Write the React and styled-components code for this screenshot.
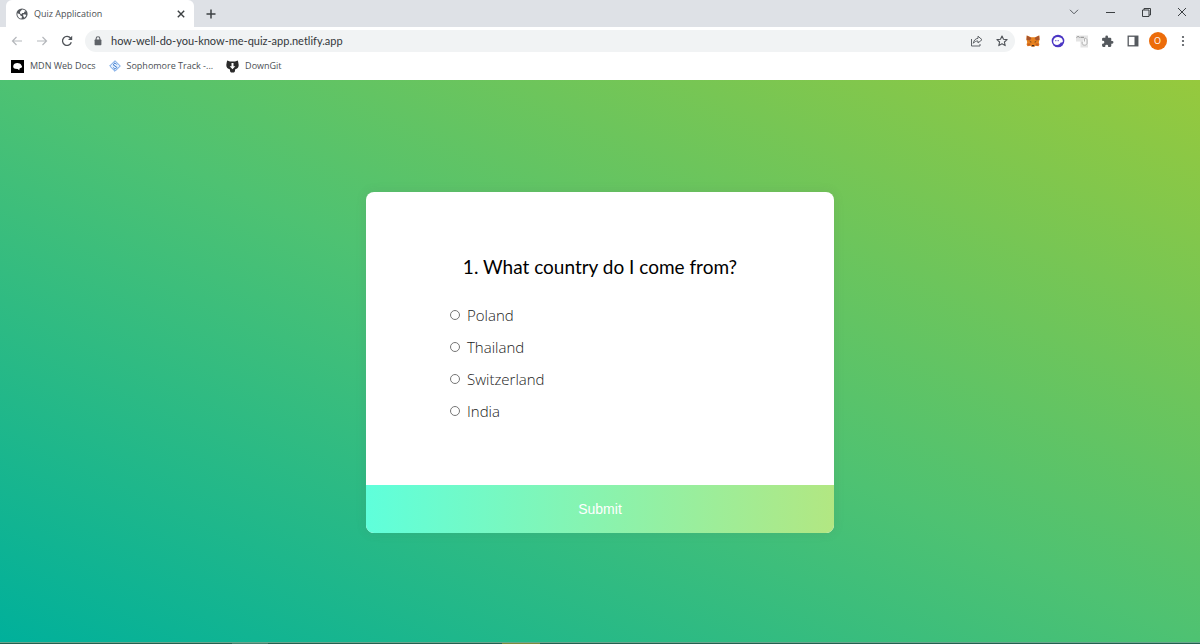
import React, { useState } from "react";
import styled, { createGlobalStyle } from "styled-components";

const answers = ["Poland", "Thailand", "Switzerland", "India"];

const GlobeIcon = () => (
  <svg width="12" height="12" viewBox="0 0 12 12">
    <circle cx="6" cy="6" r="5.6" fill="#55595e" />
    <path
      d="M1.4 5.2 4 6.3l.6 1.4L6 8.3l-.4 2.2C3 10.6 1.2 8.5 1.4 5.2zM4.2 3.4 6.2 1.5c1.5 0 2.8.7 3.5 1.8L8.3 3.8 8 5.1 6.3 5 5.3 6.2 3.9 5.2zM7.3 6.3l2.1.2.9.6c-.3 1.2-1 2.1-1.9 2.7L7.2 8z"
      fill="#fff"
    />
  </svg>
);

const CloseIcon = ({ size = 8, thick = 1.4 }) => (
  <svg width={size} height={size} viewBox="0 0 8 8">
    <path d="M.8.8 7.2 7.2M7.2.8.8 7.2" stroke="#3c4043" strokeWidth={thick} />
  </svg>
);

const PlusIcon = () => (
  <svg width="10" height="10" viewBox="0 0 10 10">
    <path d="M5 .5v9M.5 5h9" stroke="#3c4043" strokeWidth="1.5" />
  </svg>
);

const ArrowIcon = ({ flip }) => (
  <svg width="12" height="10" viewBox="0 0 12 10">
    <path
      d={flip ? "M1 5h9.5M6.5 1l4 4-4 4" : "M11 5H1.5M5.5 1l-4 4 4 4"}
      fill="none"
      stroke="#b4b7bb"
      strokeWidth="1.2"
    />
  </svg>
);

const ReloadIcon = () => (
  <svg width="12" height="12" viewBox="0 0 12 12">
    <path
      d="M10.3 7.3A4.5 4.5 0 1 1 9.6 3.2L10.6 4.3"
      fill="none"
      stroke="#4f5358"
      strokeWidth="1.3"
    />
    <path d="M11.2.8v4.2H7z" fill="#4f5358" />
  </svg>
);

const LockIcon = () => (
  <svg width="8" height="10" viewBox="0 0 8 10">
    <path d="M2.1 4V2.7a1.9 1.9 0 0 1 3.8 0V4" fill="none" stroke="#5f6368" strokeWidth="1.1" />
    <rect x=".6" y="3.6" width="6.8" height="5.6" rx=".7" fill="#5f6368" />
  </svg>
);

const ShareIcon = () => (
  <svg width="13" height="12" viewBox="0 0 13 12">
    <path d="M1.5 4v7h8.5V9" fill="none" stroke="#5f6368" />
    <path
      d="M8 1.2 12 4.7 8 8V6C6 6 4.5 6.6 3.3 8.3 3.7 5.5 5.3 3.7 8 3.3z"
      fill="none"
      stroke="#5f6368"
      strokeLinejoin="round"
    />
  </svg>
);

const StarIcon = () => (
  <svg width="12" height="12" viewBox="0 0 12 12">
    <path
      d="m6 1 1.5 3.3 3.6.3-2.7 2.4.8 3.6L6 8.7l-3.2 1.9.8-3.6L.9 4.6l3.6-.3z"
      fill="none"
      stroke="#4f5358"
      strokeWidth="1.1"
      strokeLinejoin="round"
    />
  </svg>
);

const FoxIcon = () => (
  <svg width="14" height="12" viewBox="0 0 14 12">
    <path
      d="M.8.5 5 2.3h4L13.2.5l.4 3.8-.8 3 .6 2.3-1 1.7-2.9-.6L8.3 11.8H5.7L4.5 10.7l-2.9.6-1-1.7.6-2.3-.8-3z"
      fill="#e8821e"
    />
    <path d="M.8.5 5.4 3 4 5.5.6 5zM13.2.5 8.6 3 10 5.5l3.4-.5z" fill="#a9542b" />
    <path d="m3.4 6.3 2 .4-.3 1.1zM10.6 6.3l-2 .4.3 1.1zM6 10h2l.4 1.3H5.6z" fill="#3d2a22" />
    <path d="m1.5 8.4 3 .2-.3 1.6-2.7.6zM12.5 8.4l-3 .2.3 1.6 2.7.6z" fill="#c75f20" />
  </svg>
);

const GhostIcon = () => (
  <svg width="14" height="14" viewBox="0 0 14 14">
    <circle cx="7" cy="7" r="6.3" fill="#4b36c4" />
    <path
      d="M2.2 7.6C2.2 4.8 4.3 3 7.1 3.1c2.9.1 4.9 2 4.8 4.2-.1 1.1-.9 1.4-2.2 1.3-.7 1.6-2 2.4-3.6 2.4C3.7 11 2.2 9.6 2.2 7.6z"
      fill="#fff"
    />
    <path d="M4.2 6.7h1.2M6.6 6.7h1.2" stroke="#4b36c4" strokeWidth="1" />
  </svg>
);

const GrabIcon = () => (
  <svg width="13" height="13" viewBox="0 0 13 13">
    <path d="M0 .5h12v12H4.5V6.5H0z" fill="#e4e4e4" />
    <path d="M.5 2.6c1-1.4 2.6-1.2 3.2 0M4.5 2.3H8" fill="none" stroke="#8d8d8d" />
    <path
      d="M8.5 3.6c1.3-.7 2.5 0 2.5 1.5v3.2c0 2.5-4.8 2.5-4.8 0V6.7M8.5 3.6v2.9"
      fill="#f7f7f7"
      stroke="#a2a2a2"
      strokeWidth=".8"
    />
  </svg>
);

const PuzzleIcon = () => (
  <svg width="13" height="13" viewBox="0 0 24 24">
    <path
      d="M20.5 11H19V7a2 2 0 0 0-2-2h-4V3.5a2.5 2.5 0 0 0-5 0V5H4a2 2 0 0 0-2 2v3.8h1.5a2.7 2.7 0 0 1 0 5.4H2V20a2 2 0 0 0 2 2h3.8v-1.5a2.7 2.7 0 0 1 5.4 0V22H17a2 2 0 0 0 2-2v-4h1.5a2.5 2.5 0 0 0 0-5z"
      fill="#55595e"
    />
  </svg>
);

const PanelIcon = () => (
  <svg width="12" height="12" viewBox="0 0 12 12">
    <rect x="1.2" y="1.2" width="9.6" height="9.6" fill="#fff" stroke="#55595e" strokeWidth="1.3" />
    <path d="M7.5 1h3.5v10H7.5z" fill="#55595e" />
  </svg>
);

const DotsIcon = () => (
  <svg width="4" height="12" viewBox="0 0 4 12">
    <g fill="#4f5358">
      <circle cx="2" cy="2" r="1.1" />
      <circle cx="2" cy="6" r="1.1" />
      <circle cx="2" cy="10" r="1.1" />
    </g>
  </svg>
);

const MdnIcon = () => (
  <svg width="13" height="13" viewBox="0 0 13 13">
    <rect width="13" height="13" fill="#000" />
    <path
      d="M2.2 6.2C2.4 4.2 4.200 3.100 6.300 3.100c2 0 3.200.7 3.900 1.900l.9 1.400-.6 1.400-1.700.5-.6 2L6.700 8.900 4.300 8.700C3 8.400 2.100 7.500 2.200 6.200z"
      fill="#fff"
    />
  </svg>
);

const TrackIcon = () => (
  <svg width="12" height="12" viewBox="0 0 12 12">
    <path d="m6 .7 5.3 5.3L6 11.3.7 6z" fill="#e4effc" stroke="#6b9fe3" />
    <path
      d="m6 2.8 1.8 1.8M6 2.8 4.1 4.7l3.8 2.7L6 9.3 4.2 7.5"
      fill="none"
      stroke="#3c7bd0"
    />
  </svg>
);

const DownGitIcon = () => (
  <svg width="13" height="13" viewBox="0 0 13 13">
    <path
      d="M1.3.5 4 1.6h5L11.7.5c.8 2 .6 2.7 1 4.5 0 2.4-1.4 3.9-3.7 4.4v1.8L8 12.500H5l-1-1.300V9.400C1.700 8.900.3 7.400.3 5 .7 3.200.5 2.500 1.300.5z"
      fill="#2b2b2b"
    />
    <path d="M5.500 3h2v3.300h1.800L6.500 9.200 3.700 6.300h1.800z" fill="#fff" />
  </svg>
);

const ChevronIcon = () => (
  <svg width="10" height="6" viewBox="0 0 10 6">
    <path d="m1 .8 4 4 4-4" fill="none" stroke="#55595e" />
  </svg>
);

const MinimizeIcon = () => (
  <svg width="9" height="9" viewBox="0 0 9 9">
    <path d="M0 4.5h9" stroke="#3c4043" />
  </svg>
);

const RestoreIcon = () => (
  <svg width="9" height="9" viewBox="0 0 9 9">
    <path d="M.5 2H7v6.5H.5zM2 2V.5h6.5V7H7" fill="none" stroke="#3c4043" strokeLinejoin="round" />
  </svg>
);

const Browser = () => (
  <header>
    <TabStrip>
      <Tab>
        <GlobeIcon />
        <TabTitle>Quiz Application</TabTitle>
        <IconButton aria-label="Close tab">
          <CloseIcon />
        </IconButton>
      </Tab>
      <IconButton aria-label="New tab">
        <PlusIcon />
      </IconButton>
      <WindowControls>
        <IconButton aria-label="Search tabs">
          <ChevronIcon />
        </IconButton>
        <IconButton aria-label="Minimize">
          <MinimizeIcon />
        </IconButton>
        <IconButton aria-label="Restore">
          <RestoreIcon />
        </IconButton>
        <IconButton aria-label="Close window">
          <CloseIcon size={10} thick={0.8} />
        </IconButton>
      </WindowControls>
    </TabStrip>
    <Toolbar>
      <NavButtons>
        <IconButton aria-label="Back">
          <ArrowIcon />
        </IconButton>
        <IconButton aria-label="Forward">
          <ArrowIcon flip />
        </IconButton>
        <IconButton aria-label="Reload">
          <ReloadIcon />
        </IconButton>
      </NavButtons>
      <AddressBar>
        <LockIcon />
        <AddressInput
          aria-label="Address"
          defaultValue="how-well-do-you-know-me-quiz-app.netlify.app"
        />
        <ToolIcons $count={2}>
          <IconButton aria-label="Share">
            <ShareIcon />
          </IconButton>
          <IconButton aria-label="Bookmark this page">
            <StarIcon />
          </IconButton>
        </ToolIcons>
      </AddressBar>
      <ToolIcons $count={7}>
        <IconButton aria-label="Wallet">
          <FoxIcon />
        </IconButton>
        <IconButton aria-label="Ghost wallet">
          <GhostIcon />
        </IconButton>
        <IconButton aria-label="Grabber">
          <GrabIcon />
        </IconButton>
        <IconButton aria-label="Extensions">
          <PuzzleIcon />
        </IconButton>
        <IconButton aria-label="Side panel">
          <PanelIcon />
        </IconButton>
        <Avatar aria-label="Profile">O</Avatar>
        <IconButton aria-label="Menu">
          <DotsIcon />
        </IconButton>
      </ToolIcons>
    </Toolbar>
    <Bookmarks>
      <Bookmark href="#mdn">
        <MdnIcon />
        MDN Web Docs
      </Bookmark>
      <Bookmark href="#track">
        <TrackIcon />
        Sophomore Track -...
      </Bookmark>
      <Bookmark href="#downgit">
        <DownGitIcon />
        DownGit
      </Bookmark>
    </Bookmarks>
  </header>
);

const Quiz = () => {
  const [selected, setSelected] = useState(null);

  return (
    <QuizCard onSubmit={(e) => e.preventDefault()}>
      <QuizHeader>
        <h2 id="question">1. What country do I come from?</h2>
        <ul aria-labelledby="question">
          {answers.map((answer) => (
            <li key={answer}>
              <input
                type="radio"
                name="answer"
                id={answer}
                checked={selected === answer}
                onChange={() => setSelected(answer)}
              />
              <label htmlFor={answer}>{answer}</label>
            </li>
          ))}
        </ul>
      </QuizHeader>
      <SubmitButton type="submit">Submit</SubmitButton>
    </QuizCard>
  );
};

const App = () => (
  <>
    <GlobalStyle />
    <Page>
      <Browser />
      <Main>
        <Quiz />
      </Main>
      <Taskbar>
        <TaskItem $width={36} $color="#46816f" />
        <TaskItem $width={38} $color="#7b8b3c" />
      </Taskbar>
    </Page>
  </>
);

export default App;

const GlobalStyle = createGlobalStyle`
  * {
    box-sizing: border-box;
  }

  body {
    margin: 0;
    font-family: "Open Sans", "Noto Sans", sans-serif;
  }

  svg {
    display: block;
    flex: none;
  }
`;

const Page = styled.div`
  display: flex;
  flex-direction: column;
  min-height: 100vh;
`;

const IconButton = styled.button`
  display: flex;
  align-items: center;
  justify-content: center;
  flex: none;
  padding: 0;
  border: 0;
  background: none;
  cursor: pointer;
`;

const TabStrip = styled.div`
  display: flex;
  align-items: center;
  height: 27px;
  padding-left: 6px;
  background: #dee1e6;
`;

const Tab = styled.div`
  display: flex;
  align-items: center;
  gap: 6px;
  width: 188px;
  height: 27px;
  margin-right: 12px;
  padding: 0 9px 0 10px;
  border-radius: 6px 6px 0 0;
  background: #fff;
`;

const TabTitle = styled.span`
  flex: 1;
  color: #4b4f54;
  font-size: 9px;
  line-height: 12px;
`;

const WindowControls = styled.div`
  display: grid;
  grid-template-columns: repeat(4, 36px);
  margin-left: auto;
  padding-bottom: 3px;
`;

const Toolbar = styled.div`
  display: flex;
  align-items: center;
  gap: 5px;
  height: 28px;
  padding: 0 5px 0 11px;
  background: #fff;
`;

const NavButtons = styled.div`
  display: flex;
  gap: 13px;
  margin-right: 7px;
`;

const AddressBar = styled.div`
  display: flex;
  align-items: center;
  flex: 1;
  gap: 9px;
  height: 22px;
  padding: 0 1px 0 9px;
  border-radius: 11px;
  background: #f1f3f4;
`;

const AddressInput = styled.input`
  flex: 1;
  min-width: 0;
  padding: 0;
  border: 0;
  outline: 0;
  background: none;
  color: #33373b;
  font-family: Lato, "Open Sans", sans-serif;
  font-size: 11px;
  line-height: 16px;
`;

const ToolIcons = styled.div`
  display: grid;
  grid-template-columns: repeat(${({ $count }) => $count}, 25px);
  align-items: center;
`;

const Avatar = styled.button`
  justify-self: center;
  width: 18px;
  height: 18px;
  padding: 0;
  border: 0;
  border-radius: 50%;
  background: #ec6c0a;
  color: #fff;
  font-family: inherit;
  font-size: 9px;
  line-height: 18px;
`;

const Bookmarks = styled.nav`
  display: flex;
  align-items: center;
  gap: 13px;
  height: 25px;
  padding: 0 11px 3px;
  background: #fff;
`;

const Bookmark = styled.a`
  display: flex;
  align-items: center;
  gap: 6px;
  color: #4b4f54;
  font-size: 9px;
  line-height: 12px;
  text-decoration: none;
  white-space: nowrap;
`;

const Main = styled.main`
  display: flex;
  align-items: center;
  justify-content: center;
  flex: 1;
  padding: 22px 20px 20px;
  background: linear-gradient(to top right, #00b09b, #4ec272, #96c93d);
`;

const QuizCard = styled.form`
  width: 468px;
  max-width: 100%;
  overflow: hidden;
  border-radius: 8px;
  background: #fff;
  box-shadow: 0 0 8px 2px rgba(100, 100, 100, 0.1);
`;

const QuizHeader = styled.div`
  padding: 50px 62px 58px;

  h2 {
    margin: 0;
    padding: 12px 0;
    color: #000;
    font-family: Lato, "Open Sans", sans-serif;
    font-size: 19px;
    font-weight: 400;
    line-height: 26px;
    text-align: center;
  }

  ul {
    margin: 0;
    padding: 7px 22px 0;
    list-style: none;
  }

  li {
    display: flex;
    align-items: center;
    gap: 7px;
    height: 32px;
    color: #222;
    font-size: 15px;
    font-weight: 300;
    line-height: 20px;
  }

  input {
    width: 10px;
    height: 10px;
    margin: 0;
  }

  label {
    cursor: pointer;
  }
`;

const SubmitButton = styled.button`
  display: block;
  width: 100%;
  padding: 15px;
  border: 0;
  background: linear-gradient(to right, #5fffdb, #b2e782);
  color: #fff;
  font-family: "Liberation Sans", Arial, sans-serif;
  font-size: 14px;
  line-height: 18px;
  cursor: pointer;
`;

const Taskbar = styled.footer`
  display: flex;
  gap: 234px;
  height: 2px;
  padding-left: 232px;
  border-top: 1px solid #6aa68d;
  background: #22604f;
`;

const TaskItem = styled.span`
  width: ${({ $width }) => $width}px;
  background: ${({ $color }) => $color};
`;
